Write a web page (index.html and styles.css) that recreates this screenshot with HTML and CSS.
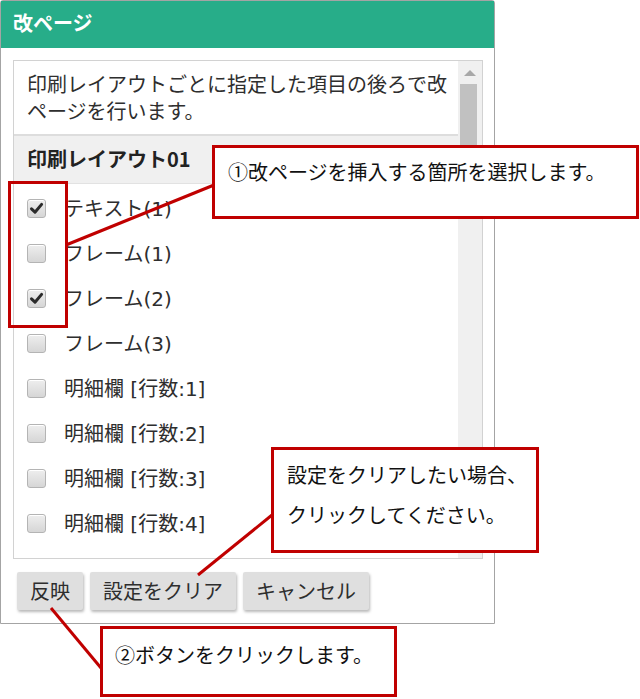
FILE: index.html
```html
<!DOCTYPE html>
<html lang="ja">
<head>
<meta charset="utf-8">
<title>改ページ</title>
<link rel="stylesheet" href="styles.css">
</head>
<body>
<div class="page">
  <div class="dialog">
    <div class="dialog-header">改ページ</div>
    <div class="dialog-body">
      <div class="panel">
        <div class="panel-content">
          <p class="desc">印刷レイアウトごとに指定した項目の後ろで改ページを行います。</p>
          <div class="group-title">印刷レイアウト01</div>
          <ul class="items">
            <li class="item"><span class="cb checked"><svg viewBox="0 0 19 19" width="19" height="19"><path d="M4.5 9.8 L8 13.2 L14.6 5.4" fill="none" stroke="#2b2b2b" stroke-width="3" stroke-linecap="round" stroke-linejoin="round"/></svg></span><span class="label">テキスト(1)</span></li>
            <li class="item"><span class="cb"></span><span class="label">フレーム(1)</span></li>
            <li class="item"><span class="cb checked"><svg viewBox="0 0 19 19" width="19" height="19"><path d="M4.5 9.8 L8 13.2 L14.6 5.4" fill="none" stroke="#2b2b2b" stroke-width="3" stroke-linecap="round" stroke-linejoin="round"/></svg></span><span class="label">フレーム(2)</span></li>
            <li class="item"><span class="cb"></span><span class="label">フレーム(3)</span></li>
            <li class="item"><span class="cb"></span><span class="label">明細欄 [行数:1]</span></li>
            <li class="item"><span class="cb"></span><span class="label">明細欄 [行数:2]</span></li>
            <li class="item"><span class="cb"></span><span class="label">明細欄 [行数:3]</span></li>
            <li class="item"><span class="cb"></span><span class="label">明細欄 [行数:4]</span></li>
          </ul>
        </div>
        <div class="scrollbar">
          <div class="sb-arrow"></div>
          <div class="sb-thumb"></div>
        </div>
      </div>
      <div class="buttons">
        <button class="btn">反映</button>
        <button class="btn">設定をクリア</button>
        <button class="btn">キャンセル</button>
      </div>
    </div>
  </div>

  <svg class="leaders" width="640" height="699" viewBox="0 0 640 699">
    <line x1="66" y1="245" x2="214" y2="185" />
    <line x1="198" y1="575" x2="272" y2="515" />
    <line x1="51" y1="608" x2="101" y2="668" />
  </svg>
  <div class="highlight"></div>
  <div class="callout callout-1">①改ページを挿入する箇所を選択します。</div>
  <div class="callout callout-2">設定をクリアしたい場合、<br>クリックしてください。</div>
  <div class="callout callout-3">②ボタンをクリックします。</div>
</div>
</body>
</html>
```
FILE: styles.css
```css
html, body {
  margin: 0;
  padding: 0;
  background: #ffffff;
}
body {
  font-family: "Noto Sans CJK JP", "Noto Sans", sans-serif;
  color: #2e2e2e;
}
.page {
  position: relative;
  width: 640px;
  height: 699px;
  overflow: hidden;
}
.dialog {
  width: 495px;
  height: 624px;
  box-sizing: border-box;
  border: 1px solid #a4a4a4;
  border-radius: 3px 3px 0 0;
  background: #ffffff;
}
.dialog-header {
  height: 47px;
  background: #27ad89;
  color: #ffffff;
  font-weight: bold;
  font-size: 20px;
  line-height: 43px;
  padding-left: 12px;
}
.dialog-body {
  padding: 12px 11px 13px 12px;
}
.panel {
  width: 470px;
  height: 499px;
  box-sizing: border-box;
  border: 1px solid #d2d2d2;
  display: flex;
}
.panel-content {
  flex: 1;
  overflow: hidden;
}
.desc {
  margin: 0;
  padding: 9px 10px 10px 13px;
  font-size: 20px;
  line-height: 27px;
  border-bottom: 2px solid #dddddd;
}
.group-title {
  height: 47px;
  line-height: 46px;
  background: #f0f0f0;
  font-weight: bold;
  font-size: 20px;
  color: #222222;
  padding-left: 13px;
  border-bottom: 1px solid #e2e2e2;
}
.items {
  list-style: none;
  margin: 0;
  padding: 2px 0 0 0;
}
.item {
  height: 45px;
  display: flex;
  align-items: center;
  padding-left: 13px;
  font-size: 20px;
}
.cb {
  width: 19px;
  height: 19px;
  box-sizing: border-box;
  border: 1px solid #b4b4b4;
  border-radius: 3px;
  background: linear-gradient(#eeeeee, #d6d6d6);
  box-shadow: inset 0 1px 0 #ffffff;
  margin-right: 18px;
  position: relative;
  flex: none;
}
.cb svg {
  position: absolute;
  left: -1px;
  top: -1px;
}
.label {
  line-height: 28px;
  font-family: "DejaVu Sans", "Noto Sans CJK JP", sans-serif;
}
.scrollbar {
  width: 24px;
  background: #f0f0f0;
  position: relative;
}
.sb-arrow {
  width: 0;
  height: 0;
  margin: 9px auto 0 auto;
  border-left: 6px solid transparent;
  border-right: 6px solid transparent;
  border-bottom: 6px solid #a8a8a8;
}
.sb-thumb {
  width: 17px;
  height: 105px;
  margin: 8px 0 0 2px;
  background: #c1c1c1;
}
.buttons {
  display: flex;
  gap: 7px;
  margin-top: 13px;
  padding-left: 4px;
}
.btn {
  height: 38px;
  padding: 0 13px;
  border: none;
  border-radius: 2px;
  background: #dfdfdf;
  box-shadow: 1px 2px 3px rgba(0, 0, 0, 0.28);
  font-family: "Noto Sans CJK JP", "Noto Sans", sans-serif;
  font-size: 20px;
  color: #2e2e2e;
  line-height: 38px;
}
.leaders {
  position: absolute;
  left: 0;
  top: 0;
  pointer-events: none;
}
.leaders line {
  stroke: #c00000;
  stroke-width: 3;
}
.highlight {
  position: absolute;
  left: 8px;
  top: 181px;
  width: 60px;
  height: 147px;
  box-sizing: border-box;
  border: 3px solid #c00000;
}
.callout {
  position: absolute;
  box-sizing: border-box;
  border: 3px solid #c00000;
  background: #ffffff;
  color: #111111;
  font-size: 20px;
}
.callout-1 {
  left: 212px;
  top: 145px;
  width: 427px;
  height: 74px;
  padding: 10px 0 0 13px;
  line-height: 28px;
}
.callout-2 {
  left: 271px;
  top: 447px;
  width: 268px;
  height: 106px;
  padding: 5px 0 0 13px;
  line-height: 40px;
}
.callout-3 {
  left: 100px;
  top: 626px;
  width: 297px;
  height: 71px;
  padding: 12px 0 0 12px;
  line-height: 28px;
}
```
